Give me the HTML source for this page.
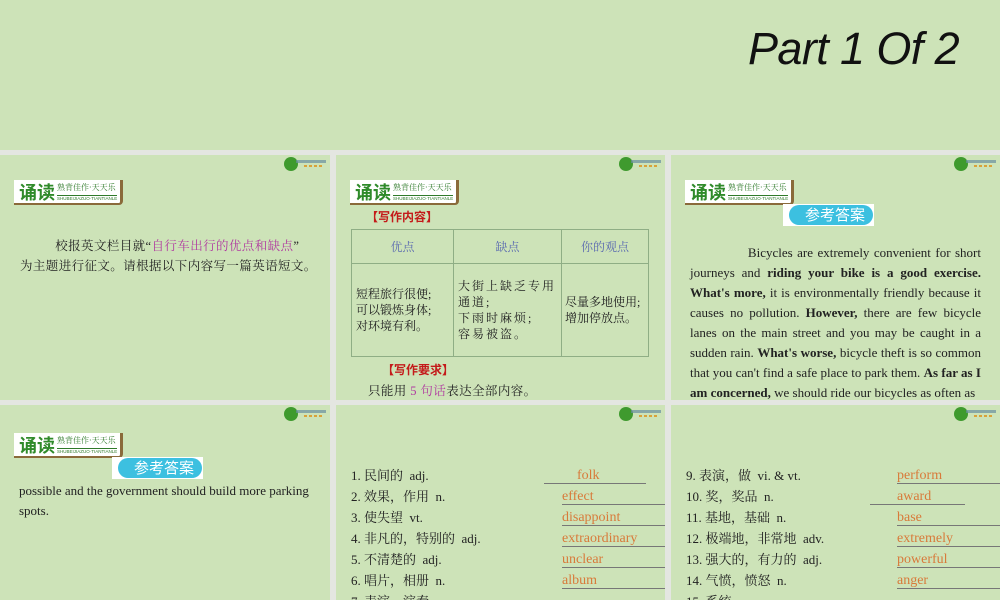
<!DOCTYPE html>
<html><head><meta charset="utf-8"><style>
*{margin:0;padding:0;box-sizing:border-box}
body{width:1000px;height:600px;background:#e4e6e1;position:relative;overflow:hidden;font-family:"Liberation Serif","Noto Serif CJK SC",serif;color:#222}
.p{position:absolute;background:#cde3b8;overflow:hidden}
.title{position:absolute;left:748px;top:23px;font:italic 45px "Liberation Sans",sans-serif;color:#111;letter-spacing:-0.6px}
.logo{position:absolute;right:2px;top:2px;width:44px;height:14px}
.logo i{position:absolute;left:0;top:0;width:14px;height:14px;border-radius:50%;background:#3f9a2e}
.logo b{position:absolute;left:12px;top:3px;width:30px;height:3px;background:#6a8fa0;opacity:.7}
.logo u{position:absolute;left:20px;top:8px;width:18px;height:2px;background:repeating-linear-gradient(90deg,#d9a23a 0 3px,transparent 3px 5px)}
.badge{position:absolute;left:14px;top:25px;width:109px;height:25px;background:#fff;border-right:3px solid #8a6a3a;border-bottom:2px solid #8a6a3a;border-radius:0 0 4px 0;overflow:hidden}
.badge .a{position:absolute;left:5px;top:1px;font:bold 18px "Noto Sans CJK SC",sans-serif;color:#2f8a2a;line-height:22px}
.badge .b{position:absolute;left:43px;top:2px;font:8px "Noto Serif CJK SC",serif;color:#2f7a2a;white-space:nowrap}
.badge .c{position:absolute;left:43px;top:15px;font:4.5px "Liberation Sans",sans-serif;color:#2f7a2a;white-space:nowrap;border-top:1px solid #2f7a2a}
.ans{position:absolute;width:91px;height:22px;background:#fff}
.ans span{position:absolute;left:6px;top:1px;width:84px;height:20px;border-radius:10px;background:#3cc0e0;color:#fff;font:15px "Noto Sans CJK SC",sans-serif;line-height:20px;text-align:right;padding-right:8px}
.t{position:absolute;font-size:12.5px;line-height:20px;letter-spacing:.4px}
.pink{color:#b03aa0}
.red{color:#c41a1a;font-weight:bold;font-family:"Noto Sans CJK SC",sans-serif;font-size:12px}
table{position:absolute;left:15px;top:74px;width:298px;border-collapse:collapse;font-size:12px}
td{border:1px solid #8fae85;vertical-align:middle;line-height:16px;padding:0 4px}
.eng{position:absolute;left:19px;width:292px;font-size:13px;line-height:20px;text-align:justify}
.list{position:absolute;left:15px;top:60px;font-size:13px;line-height:21px;font-family:"Liberation Serif","Noto Serif CJK SC",serif}
.list div{position:relative;height:21px;white-space:nowrap}
.list em{font-style:normal;position:absolute;left:211px;color:#d87a3a;font-size:14px}
.list s{text-decoration:none;position:absolute;left:211px;width:118px;top:18px;border-top:1px solid #777}
</style></head><body>
<div class="p" style="left:0;top:0;width:1000px;height:150px"></div>
<div class="title">Part 1 Of 2</div>

<div class="p" style="left:0;top:155px;width:330px;height:245px">
<div class="logo"><i></i><b></b><u></u></div>
<div class="badge"><span class="a">诵读</span><span class="b">熟背佳作·天天乐</span><span class="c">SHUBEIJIAZUO·TIANTIANLE</span></div>
<div class="t" style="left:20px;top:81px;width:310px">&nbsp;&nbsp;&nbsp;&nbsp;&nbsp;&nbsp;&nbsp;&nbsp;&nbsp;&nbsp;校报英文栏目就“<span class="pink">自行车出行的优点和缺点</span>”<br>为主题进行征文。请根据以下内容写一篇英语短文。</div>
</div>

<div class="p" style="left:336px;top:155px;width:329px;height:245px">
<div class="logo"><i></i><b></b><u></u></div>
<div class="badge"><span class="a">诵读</span><span class="b">熟背佳作·天天乐</span><span class="c">SHUBEIJIAZUO·TIANTIANLE</span></div>
<div class="red" style="position:absolute;left:30px;top:53px">【写作内容】</div>
<table><tr style="height:34px;color:#5a6ab0;text-align:center"><td style="width:102px">优点</td><td style="width:108px">缺点</td><td>你的观点</td></tr>
<tr style="height:93px"><td>短程旅行很便;<br>可以锻炼身体;<br>对环境有利。</td><td style="letter-spacing:2px">大街上缺乏专用<br>通道;<br>下雨时麻烦;<br>容易被盗。</td><td style="padding-left:3px">尽量多地使用;<br>增加停放点。</td></tr></table>
<div class="red" style="position:absolute;left:46px;top:206px">【写作要求】</div>
<div class="t" style="left:32px;top:226px">只能用 <span class="pink">5 句话</span>表达全部内容。</div>
</div>

<div class="p" style="left:671px;top:155px;width:329px;height:245px">
<div class="logo"><i></i><b></b><u></u></div>
<div class="badge"><span class="a">诵读</span><span class="b">熟背佳作·天天乐</span><span class="c">SHUBEIJIAZUO·TIANTIANLE</span></div>
<div class="ans" style="left:112px;top:49px"><span>参考答案</span></div>
<div class="eng" style="top:88px;width:291px">&nbsp;&nbsp;&nbsp;&nbsp;&nbsp;&nbsp;&nbsp;&nbsp;&nbsp;&nbsp;&nbsp;&nbsp;&nbsp;Bicycles are extremely convenient for short journeys and <b>riding your bike is a good exercise. What's more,</b> it is environmentally friendly because it causes no pollution. <b>However,</b> there are few bicycle lanes on the main street and you may be caught in a sudden rain. <b>What's worse,</b> bicycle theft is so common that you can't find a safe place to park them. <b>As far as I am concerned,</b> we should ride our bicycles as often as</div>
</div>

<div class="p" style="left:0;top:405px;width:330px;height:195px">
<div class="logo"><i></i><b></b><u></u></div>
<div class="badge" style="top:28px"><span class="a">诵读</span><span class="b">熟背佳作·天天乐</span><span class="c">SHUBEIJIAZUO·TIANTIANLE</span></div>
<div class="ans" style="left:112px;top:52px"><span>参考答案</span></div>
<div class="eng" style="top:76px;text-align:left">possible and the government should build more parking spots.</div>
</div>

<div class="p" style="left:336px;top:405px;width:329px;height:195px">
<div class="logo"><i></i><b></b><u></u></div>
<div class="list">
<div>1. 民间的&nbsp; adj.<s style="left:193px;width:102px"></s><em style="left:226px">folk</em></div>
<div>2. 效果，作用&nbsp; n.<em>effect</em><s></s></div>
<div>3. 使失望&nbsp; vt.<em>disappoint</em><s></s></div>
<div>4. 非凡的，特别的&nbsp; adj.<em>extraordinary</em><s></s></div>
<div>5. 不清楚的&nbsp; adj.<em>unclear</em><s></s></div>
<div>6. 唱片，相册&nbsp; n.<em>album</em><s></s></div>
<div>7. 表演，演奏</div>
</div>
</div>

<div class="p" style="left:671px;top:405px;width:329px;height:195px">
<div class="logo"><i></i><b></b><u></u></div>
<div class="list">
<div>9. 表演，做&nbsp; vi. &amp; vt.<em style="left:211px">perform</em><s></s></div>
<div>10. 奖，奖品&nbsp; n.<s style="left:184px;width:95px"></s><em>award</em></div>
<div>11. 基地，基础&nbsp; n.<em>base</em><s></s></div>
<div>12. 极端地，非常地&nbsp; adv.<em>extremely</em><s></s></div>
<div>13. 强大的，有力的&nbsp; adj.<em>powerful</em><s></s></div>
<div>14. 气愤，愤怒&nbsp; n.<em>anger</em><s></s></div>
<div>15. 系统</div>
</div>
</div>
</body></html>
